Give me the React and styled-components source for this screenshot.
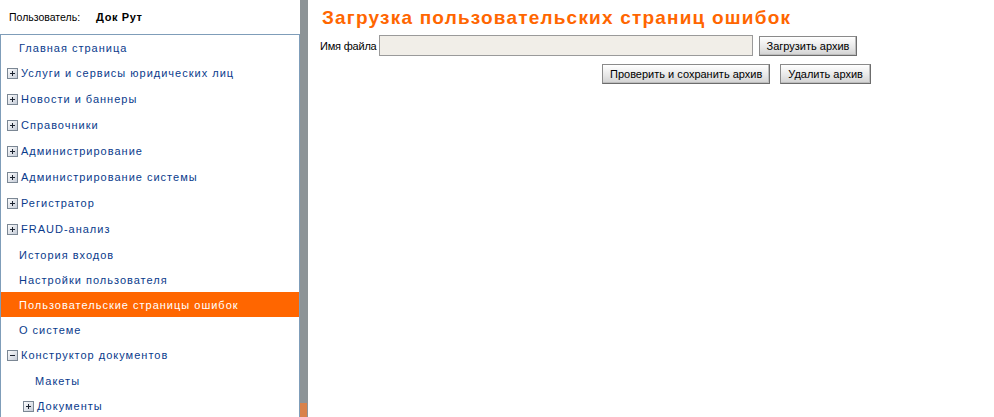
import React from "react";
import styled, { createGlobalStyle } from "styled-components";

const Global = createGlobalStyle`
  html, body { margin: 0; padding: 0; background: #fff; }
  body { font-family: "Liberation Sans", Arial, sans-serif; font-size: 11px; }
`;

const Page = styled.div`
  display: flex;
  width: 994px;
  height: 417px;
  overflow: hidden;
`;

const Sidebar = styled.div`
  width: 300px;
  flex: none;
  display: flex;
  flex-direction: column;
`;

const UserBar = styled.div`
  height: 34px;
  flex: none;
  display: flex;
  align-items: center;
  padding-left: 9px;
  color: #000;
  font-size: 10.5px;
`;

const UserName = styled.b`
  margin-left: 16px;
  font-size: 11px;
  font-weight: bold;
  letter-spacing: 0.6px;
`;

const Tree = styled.div`
  flex: none;
  border-top: 1px solid #7f9db9;
  border-left: 1px solid #7f9db9;
  border-right: 1px solid #7f9db9;
  display: flex;
  flex-direction: column;
`;

const Row = styled.div`
  height: ${(p) => (p.$icon ? 26 : 25)}px;
  flex: none;
  display: flex;
  align-items: center;
  padding-left: ${(p) => p.$indent}px;
  background: ${(p) => (p.$active ? "#ff6600" : "transparent")};
  color: ${(p) => (p.$active ? "#fff" : "#0a3b8c")};
  letter-spacing: 1px;
  white-space: nowrap;
`;

const Label = styled.span`
  margin-left: ${(p) => (p.$icon ? 3 : 0)}px;
`;

const Splitter = styled.div`
  width: 8px;
  flex: none;
  background: #8d9497;
  display: flex;
  flex-direction: column;
  justify-content: flex-end;
`;

const Thumb = styled.div`
  height: 14px;
  width: 7px;
  background: #d9824a;
`;

const Main = styled.div`
  flex: 1;
  padding-left: 12px;
`;

const Title = styled.h1`
  margin: 6px 0 0 2px;
  font-size: 19px;
  line-height: 24px;
  font-weight: bold;
  letter-spacing: 1.2px;
  color: #ff6600;
`;

const FormRow = styled.div`
  display: flex;
  align-items: center;
  margin-top: ${(p) => p.$top}px;
  margin-left: ${(p) => p.$left || 0}px;
  gap: ${(p) => p.$gap}px;
`;

const FieldLabel = styled.span`
  color: #000;
  letter-spacing: -0.2px;
  margin-right: -4px;
`;

const FileInput = styled.div`
  width: 372px;
  height: 19px;
  background: #f1eee8;
  border: 1px solid #9a9a9a;
`;

const Button = styled.button`
  height: 20px;
  padding: 0 7px;
  font-family: "Liberation Sans", Arial, sans-serif;
  font-size: 11px;
  color: #000;
  background: linear-gradient(#ffffff, #e6e6e6 60%, #d2d2d2);
  border: 1px solid #8a8a8a;
  border-right-color: #6c6c6c;
  border-bottom-color: #6c6c6c;
  box-shadow: inset -1px -1px 0 #bdbdbd;
  border-radius: 0;
`;

function Toggle({ open }) {
  const id = open ? "tgo" : "tgc";
  return (
    <svg width="11" height="11" viewBox="0 0 11 11">
      <defs>
        <linearGradient id={id} x1="0" y1="0" x2="1" y2="1">
          <stop offset="0" stopColor="#ffffff" />
          <stop offset="1" stopColor="#c3cad6" />
        </linearGradient>
      </defs>
      <rect x="0.5" y="0.5" width="10" height="10" fill={`url(#${id})`} stroke="#7b8794" />
      <rect x="3" y="5" width="5" height="1" fill="#1b2330" />
      {!open && <rect x="5" y="3" width="1" height="5" fill="#1b2330" />}
    </svg>
  );
}

const items = [
  { t: "Главная страница", indent: 18 },
  { t: "Услуги и сервисы юридических лиц", icon: "plus", indent: 6 },
  { t: "Новости и баннеры", icon: "plus", indent: 6 },
  { t: "Справочники", icon: "plus", indent: 6 },
  { t: "Администрирование", icon: "plus", indent: 6 },
  { t: "Администрирование системы", icon: "plus", indent: 6 },
  { t: "Регистратор", icon: "plus", indent: 6 },
  { t: "FRAUD-анализ", icon: "plus", indent: 6 },
  { t: "История входов", indent: 18 },
  { t: "Настройки пользователя", indent: 18 },
  { t: "Пользовательские страницы ошибок", indent: 18, active: true },
  { t: "О системе", indent: 18 },
  { t: "Конструктор документов", icon: "minus", indent: 6 },
  { t: "Макеты", indent: 34 },
  { t: "Документы", icon: "plus", indent: 22 },
];

export default function App() {
  return (
    <>
      <Global />
      <Page>
        <Sidebar>
          <UserBar>
            Пользователь:<UserName>Док Рут</UserName>
          </UserBar>
          <Tree>
            {items.map((it) => (
              <Row key={it.t} $icon={!!it.icon} $indent={it.indent} $active={it.active}>
                {it.icon && <Toggle open={it.icon === "minus"} />}
                <Label $icon={!!it.icon}>{it.t}</Label>
              </Row>
            ))}
          </Tree>
        </Sidebar>
        <Splitter>
          <Thumb />
        </Splitter>
        <Main>
          <Title>Загрузка пользовательских страниц ошибок</Title>
          <FormRow $top={5} $gap={6}>
            <FieldLabel>Имя файла</FieldLabel>
            <FileInput />
            <Button>Загрузить архив</Button>
          </FormRow>
          <FormRow $top={8} $left={282} $gap={10}>
            <Button>Проверить и сохранить архив</Button>
            <Button>Удалить архив</Button>
          </FormRow>
        </Main>
      </Page>
    </>
  );
}
